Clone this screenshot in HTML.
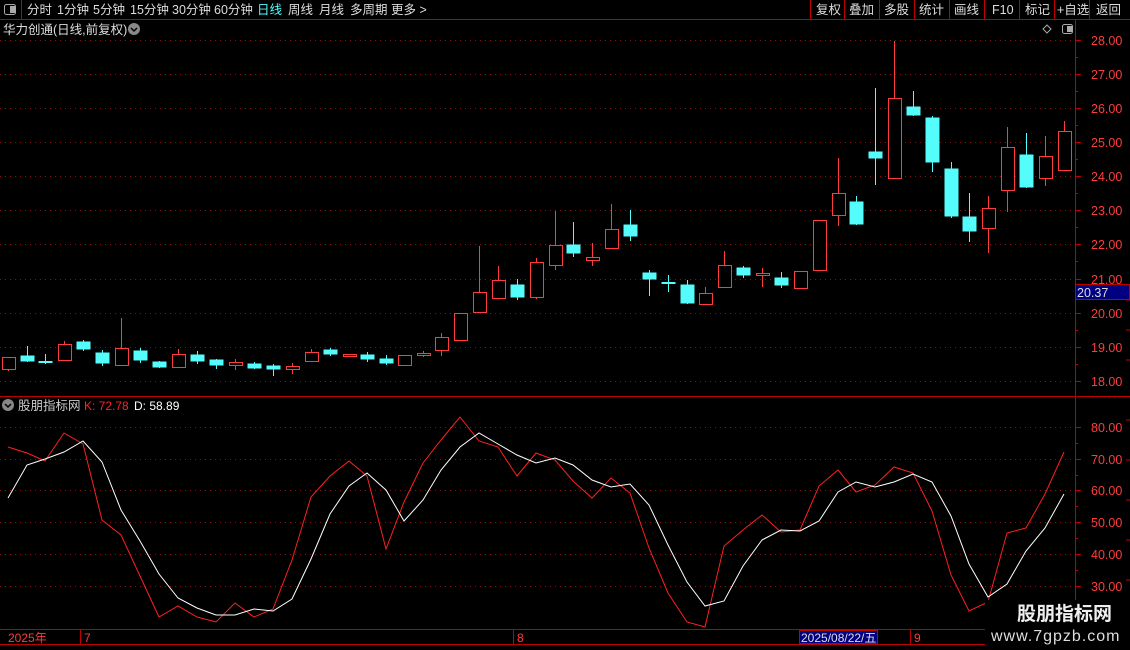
<!DOCTYPE html>
<html><head><meta charset="utf-8"><style>
body{margin:0;background:#000;width:1130px;height:650px;overflow:hidden;font-family:"Liberation Sans","Noto Sans CJK SC",sans-serif}
svg{position:absolute;left:0;top:0}
</style></head><body>
<svg width="1130" height="650" xmlns="http://www.w3.org/2000/svg" font-family="Liberation Sans, Noto Sans CJK SC, sans-serif">
<rect width="1130" height="650" fill="#000"/>
<line x1="0" y1="19.5" x2="1130" y2="19.5" stroke="#c00000"/>
<line x1="21.5" y1="0" x2="21.5" y2="19" stroke="#c00000"/>
<rect x="4.5" y="4.5" width="11" height="10" rx="2" fill="none" stroke="#aaa"/><rect x="10" y="6" width="5" height="7" fill="#aaa"/>
<g font-size="12.5" fill="#ddd">
<text x="27" y="14">分时</text><text x="57" y="14">1分钟</text><text x="93" y="14">5分钟</text><text x="130" y="14">15分钟</text><text x="172" y="14">30分钟</text><text x="214" y="14">60分钟</text>
<text x="257" y="14" fill="#54fcfc">日线</text><text x="288" y="14">周线</text><text x="319" y="14">月线</text><text x="350" y="14">多周期</text><text x="391" y="14">更多 &gt;</text>
<text x="816" y="14">复权</text><text x="849" y="14">叠加</text><text x="884" y="14">多股</text><text x="919" y="14">统计</text><text x="954" y="14">画线</text><text x="992" y="14">F10</text><text x="1025" y="14">标记</text><text x="1057" y="14">+自选</text><text x="1096" y="14">返回</text>
</g>
<g stroke="#c00000"><line x1="810.5" y1="0" x2="810.5" y2="19"/><line x1="844.5" y1="0" x2="844.5" y2="19"/><line x1="879.5" y1="0" x2="879.5" y2="19"/><line x1="914.5" y1="0" x2="914.5" y2="19"/><line x1="949.5" y1="0" x2="949.5" y2="19"/><line x1="984.5" y1="0" x2="984.5" y2="19"/><line x1="1019.5" y1="0" x2="1019.5" y2="19"/><line x1="1054.5" y1="0" x2="1054.5" y2="19"/><line x1="1089.5" y1="0" x2="1089.5" y2="19"/></g>
<text x="3" y="34" font-size="12.5" fill="#ddd">华力创通(日线,前复权)</text>
<circle cx="134" cy="29" r="6" fill="#888"/><path d="M131 28l3 3 3-3" stroke="#000" fill="none" stroke-width="1.5"/>
<path d="M1047 25l4 4-4 4-4-4z" fill="none" stroke="#aaa"/>
<rect x="1062.5" y="24.5" width="10" height="9" rx="2" fill="none" stroke="#aaa"/><rect x="1067" y="26" width="5" height="6" fill="#aaa"/>
<line x1="1075.5" y1="20" x2="1075.5" y2="650" stroke="#c00000"/>
<line x1="0" y1="396.5" x2="1130" y2="396.5" stroke="#c00000"/>
<line x1="0" y1="629.5" x2="1075" y2="629.5" stroke="#c00000"/>
<line x1="0" y1="644.5" x2="1075" y2="644.5" stroke="#c00000"/>
<g stroke="#c00000">
<line x1="1075" y1="40.5" x2="1081" y2="40.5"/><line x1="1075" y1="74.5" x2="1081" y2="74.5"/><line x1="1075" y1="108.5" x2="1081" y2="108.5"/><line x1="1075" y1="142.5" x2="1081" y2="142.5"/><line x1="1075" y1="176.5" x2="1081" y2="176.5"/><line x1="1075" y1="210.5" x2="1081" y2="210.5"/><line x1="1075" y1="244.5" x2="1081" y2="244.5"/><line x1="1075" y1="279.5" x2="1081" y2="279.5"/><line x1="1075" y1="313.5" x2="1081" y2="313.5"/><line x1="1075" y1="347.5" x2="1081" y2="347.5"/><line x1="1075" y1="381.5" x2="1081" y2="381.5"/>
<line x1="1075" y1="57.5" x2="1078" y2="57.5"/><line x1="1075" y1="91.5" x2="1078" y2="91.5"/><line x1="1075" y1="125.5" x2="1078" y2="125.5"/><line x1="1075" y1="159.5" x2="1078" y2="159.5"/><line x1="1075" y1="193.5" x2="1078" y2="193.5"/><line x1="1075" y1="227.5" x2="1078" y2="227.5"/><line x1="1075" y1="261.5" x2="1078" y2="261.5"/><line x1="1075" y1="330.5" x2="1078" y2="330.5"/><line x1="1075" y1="364.5" x2="1078" y2="364.5"/>
<line x1="1075" y1="427.5" x2="1081" y2="427.5"/><line x1="1075" y1="459.5" x2="1081" y2="459.5"/><line x1="1075" y1="490.5" x2="1081" y2="490.5"/><line x1="1075" y1="522.5" x2="1081" y2="522.5"/><line x1="1075" y1="554.5" x2="1081" y2="554.5"/><line x1="1075" y1="586.5" x2="1081" y2="586.5"/>
<line x1="1075" y1="443.5" x2="1078" y2="443.5"/><line x1="1075" y1="475.5" x2="1078" y2="475.5"/><line x1="1075" y1="506.5" x2="1078" y2="506.5"/><line x1="1075" y1="538.5" x2="1078" y2="538.5"/><line x1="1075" y1="570.5" x2="1078" y2="570.5"/>
<line x1="1126" y1="300" x2="1130" y2="300"/><line x1="1126" y1="330" x2="1130" y2="330"/><line x1="1126" y1="360" x2="1130" y2="360"/><line x1="1126" y1="420" x2="1130" y2="420"/><line x1="1126" y1="460" x2="1130" y2="460"/><line x1="1126" y1="500" x2="1130" y2="500"/><line x1="1126" y1="540" x2="1130" y2="540"/><line x1="1126" y1="580" x2="1130" y2="580"/>
</g>
<g stroke="#8a1010" stroke-dasharray="1 4">
<line x1="0" y1="40.5" x2="1075" y2="40.5"/><line x1="0" y1="74.5" x2="1075" y2="74.5"/><line x1="0" y1="108.5" x2="1075" y2="108.5"/><line x1="0" y1="142.5" x2="1075" y2="142.5"/><line x1="0" y1="176.5" x2="1075" y2="176.5"/><line x1="0" y1="210.5" x2="1075" y2="210.5"/><line x1="0" y1="244.5" x2="1075" y2="244.5"/><line x1="0" y1="279.5" x2="1075" y2="279.5"/><line x1="0" y1="313.5" x2="1075" y2="313.5"/><line x1="0" y1="347.5" x2="1075" y2="347.5"/><line x1="0" y1="381.5" x2="1075" y2="381.5"/>
<line x1="0" y1="427.5" x2="1075" y2="427.5"/><line x1="0" y1="459.5" x2="1075" y2="459.5"/><line x1="0" y1="490.5" x2="1075" y2="490.5"/><line x1="0" y1="522.5" x2="1075" y2="522.5"/><line x1="0" y1="554.5" x2="1075" y2="554.5"/><line x1="0" y1="586.5" x2="1075" y2="586.5"/>
</g>
<g font-size="12.5" fill="#ff3c3c">
<text x="1091" y="45">28.00</text><text x="1091" y="79">27.00</text><text x="1091" y="113">26.00</text><text x="1091" y="147">25.00</text><text x="1091" y="181">24.00</text><text x="1091" y="215">23.00</text><text x="1091" y="249">22.00</text><text x="1091" y="284">21.00</text><text x="1091" y="318">20.00</text><text x="1091" y="352">19.00</text><text x="1091" y="386">18.00</text>
<text x="1091" y="432">80.00</text><text x="1091" y="464">70.00</text><text x="1091" y="495">60.00</text><text x="1091" y="527">50.00</text><text x="1091" y="559">40.00</text><text x="1091" y="591">30.00</text>
</g>
<rect x="1075.5" y="284.5" width="54" height="15" fill="#000080" stroke="#c00000"/>
<text x="1077" y="297" font-size="12.5" fill="#ddd">20.37</text>
<g stroke-width="1">
<g stroke="#ff3c3c" fill="#000">
<line x1="8.5" y1="357" x2="8.5" y2="371"/><rect x="2.5" y="357.5" width="13" height="12"/>
<line x1="64.5" y1="341" x2="64.5" y2="360"/><rect x="58.5" y="344.5" width="13" height="16"/>
<line x1="121.5" y1="318" x2="121.5" y2="365"/><rect x="115.5" y="348.5" width="13" height="17"/>
<line x1="178.5" y1="349" x2="178.5" y2="368"/><rect x="172.5" y="354.5" width="13" height="13"/>
<line x1="235.5" y1="359" x2="235.5" y2="370"/><rect x="229.5" y="362.5" width="13" height="3"/>
<line x1="292.5" y1="363" x2="292.5" y2="374"/><rect x="286.5" y="366.5" width="13" height="3"/>
<line x1="311.5" y1="349" x2="311.5" y2="362"/><rect x="305.5" y="352.5" width="13" height="9"/>
<rect x="343.5" y="354.5" width="13" height="2"/>
<rect x="398.5" y="355.5" width="13" height="10"/>
<line x1="423.5" y1="351" x2="423.5" y2="357"/><rect x="417.5" y="353.5" width="13" height="2"/>
<line x1="441.5" y1="333" x2="441.5" y2="356"/><rect x="435.5" y="337.5" width="13" height="13"/>
<rect x="454.5" y="313.5" width="13" height="27"/>
<line x1="479.5" y1="246" x2="479.5" y2="312"/><rect x="473.5" y="292.5" width="13" height="20"/>
<line x1="498.5" y1="266" x2="498.5" y2="298"/><rect x="492.5" y="280.5" width="13" height="18"/>
<line x1="536.5" y1="258" x2="536.5" y2="299"/><rect x="530.5" y="262.5" width="13" height="35"/>
<line x1="555.5" y1="211" x2="555.5" y2="270"/><rect x="549.5" y="245.5" width="13" height="20"/>
<line x1="592.5" y1="243" x2="592.5" y2="266"/><rect x="586.5" y="257.5" width="13" height="3"/>
<line x1="611.5" y1="204" x2="611.5" y2="248"/><rect x="605.5" y="229.5" width="13" height="19"/>
<line x1="705.5" y1="287" x2="705.5" y2="304"/><rect x="699.5" y="293.5" width="13" height="11"/>
<line x1="724.5" y1="251" x2="724.5" y2="287"/><rect x="718.5" y="265.5" width="13" height="22"/>
<line x1="762.5" y1="268" x2="762.5" y2="287"/><rect x="756.5" y="273.5" width="13" height="2"/>
<rect x="794.5" y="271.5" width="13" height="17"/>
<rect x="813.5" y="220.5" width="13" height="50"/>
<line x1="838.5" y1="158" x2="838.5" y2="226"/><rect x="832.5" y="193.5" width="13" height="22"/>
<line x1="894.5" y1="41" x2="894.5" y2="178"/><rect x="888.5" y="98.5" width="13" height="80"/>
<line x1="988.5" y1="196" x2="988.5" y2="253"/><rect x="982.5" y="208.5" width="13" height="20"/>
<line x1="1007.5" y1="127" x2="1007.5" y2="212"/><rect x="1001.5" y="147.5" width="13" height="43"/>
<line x1="1045.5" y1="136" x2="1045.5" y2="186"/><rect x="1039.5" y="156.5" width="13" height="22"/>
<line x1="1064.5" y1="121" x2="1064.5" y2="170"/><rect x="1058.5" y="131.5" width="13" height="39"/>
</g>
<g stroke="#54fcfc" fill="#54fcfc">
<line x1="27.5" y1="346" x2="27.5" y2="362"/><rect x="21" y="356" width="13" height="5"/>
<line x1="45.5" y1="354" x2="45.5" y2="364"/><rect x="39" y="361.5" width="13" height="1"/>
<line x1="83.5" y1="340" x2="83.5" y2="351"/><rect x="77" y="342" width="13" height="7"/>
<line x1="102.5" y1="350" x2="102.5" y2="366"/><rect x="96" y="353" width="13" height="10"/>
<line x1="140.5" y1="348" x2="140.5" y2="363"/><rect x="134" y="351" width="13" height="9"/>
<line x1="159.5" y1="361" x2="159.5" y2="368"/><rect x="153" y="362" width="13" height="5"/>
<line x1="197.5" y1="351" x2="197.5" y2="364"/><rect x="191" y="355" width="13" height="6"/>
<line x1="216.5" y1="359" x2="216.5" y2="369"/><rect x="210" y="360" width="13" height="5"/>
<line x1="254.5" y1="362" x2="254.5" y2="369"/><rect x="248" y="364" width="13" height="4"/>
<line x1="273.5" y1="364" x2="273.5" y2="376"/><rect x="267" y="366" width="13" height="3"/>
<line x1="330.5" y1="348" x2="330.5" y2="356"/><rect x="324" y="350" width="13" height="4"/>
<line x1="367.5" y1="352" x2="367.5" y2="362"/><rect x="361" y="355" width="13" height="4"/>
<line x1="386.5" y1="355" x2="386.5" y2="365"/><rect x="380" y="359" width="13" height="4"/>
<line x1="517.5" y1="279" x2="517.5" y2="300"/><rect x="511" y="285" width="13" height="12"/>
<line x1="573.5" y1="222" x2="573.5" y2="257"/><rect x="567" y="245" width="13" height="8"/>
<line x1="630.5" y1="210" x2="630.5" y2="241"/><rect x="624" y="225" width="13" height="11"/>
<line x1="649.5" y1="270" x2="649.5" y2="296"/><rect x="643" y="273" width="13" height="6"/>
<line x1="668.5" y1="275" x2="668.5" y2="292"/><rect x="662" y="282.5" width="13" height="1"/>
<line x1="687.5" y1="280" x2="687.5" y2="304"/><rect x="681" y="285" width="13" height="18"/>
<line x1="743.5" y1="266" x2="743.5" y2="278"/><rect x="737" y="268" width="13" height="7"/>
<line x1="781.5" y1="272" x2="781.5" y2="288"/><rect x="775" y="278" width="13" height="7"/>
<line x1="856.5" y1="196" x2="856.5" y2="225"/><rect x="850" y="202" width="13" height="22"/>
<line x1="875.5" y1="88" x2="875.5" y2="185"/><rect x="869" y="152" width="13" height="6"/>
<line x1="913.5" y1="91" x2="913.5" y2="116"/><rect x="907" y="107" width="13" height="8"/>
<line x1="932.5" y1="116" x2="932.5" y2="172"/><rect x="926" y="118" width="13" height="44"/>
<line x1="951.5" y1="162" x2="951.5" y2="218"/><rect x="945" y="169" width="13" height="47"/>
<line x1="969.5" y1="193" x2="969.5" y2="242"/><rect x="963" y="217" width="13" height="14"/>
<line x1="1026.5" y1="133" x2="1026.5" y2="188"/><rect x="1020" y="155" width="13" height="32"/>
</g>
</g>
<polyline fill="none" stroke="#ff2020" points="8,447 27,453 45,461 64,433 83,444 102,520 121,535 140,576 159,617 178,606 197,617 216,622 235,603 254,617 273,609 292,560 311,497 330,476 349,461 367,476 386,549 404,502 423,463 441,440 460,417 479,441 498,447 517,476 536,453 555,460 573,481 592,498 611,478 630,493 649,548 668,593 687,622 705,627 724,546 743,530 762,515 781,532 800,530 819,486 838,470 856,492 875,485 894,467 913,473 932,511 951,575 969,611 988,602 1007,533 1026,528 1045,494 1064,452"/>
<polyline fill="none" stroke="#fff" points="8,498 27,465 45,459 64,452 83,441 102,462 121,510 140,541 159,574 178,598 197,608 216,615 235,615 254,609 273,611 292,599 311,559 330,514 349,486 367,473 386,490 404,521 423,500 441,470 460,447 479,433 498,444 517,455 536,463 555,458 573,465 592,480 611,487 630,484 649,505 668,545 687,582 705,606 724,601 743,566 762,540 781,530 800,531 819,521 838,492 856,482 875,487 894,482 913,474 932,482 951,516 969,564 988,597 1007,584 1026,551 1045,528 1064,494"/>
<circle cx="8" cy="405" r="6" fill="#888"/><path d="M5 404l3 3 3-3" stroke="#000" fill="none" stroke-width="1.5"/>
<text x="18" y="410" font-size="12.5" fill="#ccc">股朋指标网</text>
<text x="84" y="410" font-size="12" fill="#ff2020">K: 72.78</text>
<text x="134" y="410" font-size="12" fill="#fff">D: 58.89</text>
<g stroke="#c00000"><line x1="80.5" y1="630" x2="80.5" y2="644"/><line x1="513.5" y1="630" x2="513.5" y2="644"/><line x1="910.5" y1="630" x2="910.5" y2="644"/></g>
<text x="8" y="642" font-size="12" fill="#ff3c3c">2025年</text>
<text x="84" y="642" font-size="12" fill="#ff3c3c">7</text>
<text x="517" y="642" font-size="12" fill="#ff3c3c">8</text>
<rect x="799.5" y="630.5" width="78" height="13" fill="#000080" stroke="#c00000"/>
<text x="801" y="642" font-size="12" fill="#ddd">2025/08/22/五</text>
<text x="914" y="642" font-size="12" fill="#ff3c3c">9</text>
<rect x="985" y="600" width="145" height="50" fill="#000"/>
<text x="1017" y="620" font-size="19" font-weight="bold" fill="#eee">股朋指标网</text>
<text x="991" y="641" font-size="16" fill="#ddd" letter-spacing="1">www.7gpzb.com</text>
</svg>
</body></html>
